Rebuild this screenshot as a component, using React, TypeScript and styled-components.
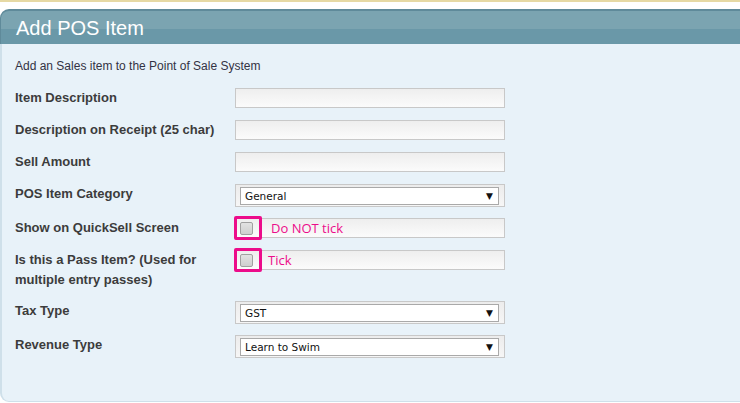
import React from 'react';
import styled, { createGlobalStyle } from 'styled-components';

const GlobalStyle = createGlobalStyle`
  html, body {
    margin: 0;
    padding: 0;
    background: #ffffff;
  }
  body {
    font-family: Arial, "Liberation Sans", sans-serif;
    overflow: hidden;
  }
`;

type TextField = { kind: 'text'; label: string };
type SelectField = { kind: 'select'; label: string; value: string };
type CheckField = { kind: 'check'; label: string; note: string };
type Field = TextField | SelectField | CheckField;

const fields: Field[] = [
  { kind: 'text', label: 'Item Description' },
  { kind: 'text', label: 'Description on Receipt (25 char)' },
  { kind: 'text', label: 'Sell Amount' },
  { kind: 'select', label: 'POS Item Category', value: 'General' },
  { kind: 'check', label: 'Show on QuickSell Screen', note: 'Do NOT tick' },
  { kind: 'check', label: 'Is this a Pass Item? (Used for multiple entry passes)', note: 'Tick' },
  { kind: 'select', label: 'Tax Type', value: 'GST' },
  { kind: 'select', label: 'Revenue Type', value: 'Learn to Swim' },
];

const App = () => {
  return (
    <>
      <GlobalStyle />
      <Page>
        <TopRule />
        <Panel>
          <PanelHeader>
            <Title>Add POS Item</Title>
          </PanelHeader>
          <PanelBody>
            <Intro>Add an Sales item to the Point of Sale System</Intro>
            <Form>
              {fields.map((f) => (
                <Row key={f.label}>
                  <Label>{f.label}</Label>
                  {f.kind === 'text' && <Input />}
                  {f.kind === 'select' && (
                    <SelectWrap>
                      <Select>
                        <span>{f.value}</span>
                        <Arrow>▼</Arrow>
                      </Select>
                    </SelectWrap>
                  )}
                  {f.kind === 'check' && (
                    <CheckField>
                      <Checkbox />
                      <Highlight />
                      <Note $short={f.note === 'Tick'}>{f.note}</Note>
                    </CheckField>
                  )}
                </Row>
              ))}
            </Form>
          </PanelBody>
        </Panel>
      </Page>
    </>
  );
};

export default App;

const Page = styled.div`
  width: 740px;
  height: 403px;
  overflow: hidden;
`;

const TopRule = styled.div`
  height: 2px;
  background-color: #e6d9a4;
  margin-bottom: 7px;
`;

const Panel = styled.div`
  width: 760px;
`;

const PanelHeader = styled.div`
  height: 35px;
  box-sizing: border-box;
  padding-left: 15px;
  border-top-left-radius: 9px;
  border-top: 2px solid #5f8a9a;
  border-left: 1px solid #5f8a9a;
  background: linear-gradient(to bottom, #7ba4b1 0px, #7ba4b1 18px, #6a98a8 18px, #6a98a8 100%);
  display: flex;
  align-items: center;
`;

const Title = styled.h1`
  margin: 0;
  padding-top: 1px;
  font-size: 20px;
  font-weight: normal;
  color: #ffffff;
  font-family: Arial, "Liberation Sans", sans-serif;
`;

const PanelBody = styled.div`
  height: 358px;
  box-sizing: border-box;
  padding: 14px 15px 0 13px;
  background-color: #e8f2f9;
  border-left: 2px solid #cfe0ea;
  border-bottom: 1px solid #cfe0ea;
  border-bottom-left-radius: 9px;
`;

const Intro = styled.p`
  margin: 0 0 14px;
  font-size: 12px;
  line-height: 16px;
  color: #333344;
`;

const Form = styled.div`
  display: flex;
  flex-direction: column;
  gap: 12px;
`;

const Row = styled.div`
  display: flex;
  align-items: flex-start;
`;

const Label = styled.div`
  width: 220px;
  flex: none;
  padding-right: 20px;
  box-sizing: border-box;
  font-size: 13px;
  font-weight: bold;
  line-height: 20px;
  margin-bottom: -1px;
  color: #3c3c3c;
`;

const Input = styled.div`
  width: 270px;
  height: 20px;
  box-sizing: border-box;
  border: 1px solid #c8c8c8;
  background: linear-gradient(to bottom, #eeeeee, #fbfbfb);
`;

const SelectWrap = styled.div`
  width: 270px;
  height: 23px;
  margin-bottom: -1px;
  box-sizing: border-box;
  padding: 2px 5px 0 4px;
  border: 1px solid #c8c8c8;
  background: linear-gradient(to bottom, #ececec, #f6f6f6);
`;

const Select = styled.div`
  height: 18px;
  box-sizing: border-box;
  border: 1px solid #a9a9a9;
  background-color: #ffffff;
  display: flex;
  align-items: center;
  justify-content: space-between;
  padding: 0 5px 0 4px;
  font-family: "DejaVu Sans", Tahoma, sans-serif;
  font-size: 10.5px;
  color: #111111;
`;

const Arrow = styled.span`
  font-size: 9px;
  color: #111111;
`;

const CheckField = styled.div`
  position: relative;
  width: 270px;
  height: 20px;
  box-sizing: border-box;
  border: 1px solid #c8c8c8;
  background: linear-gradient(to bottom, #eeeeee, #fbfbfb);
  display: flex;
  align-items: center;
`;

const Checkbox = styled.span`
  width: 13px;
  height: 13px;
  margin-left: 4px;
  box-sizing: border-box;
  border: 1px solid #a0a0a0;
  border-radius: 2px;
  background: linear-gradient(to bottom, #e2e2e2, #cfcfcf);
`;

const Highlight = styled.span`
  position: absolute;
  left: -2px;
  top: -3px;
  width: 28px;
  height: 24px;
  box-sizing: border-box;
  border: 3px solid #ec0c8a;
  border-radius: 2px;
`;

const Note = styled.span<{ $short?: boolean }>`
  margin-left: ${({ $short }) => ($short ? '15px' : '18px')};
  font-family: "Open Sans", "DejaVu Sans", sans-serif;
  font-size: 13px;
  color: #ec0c8a;
`;
